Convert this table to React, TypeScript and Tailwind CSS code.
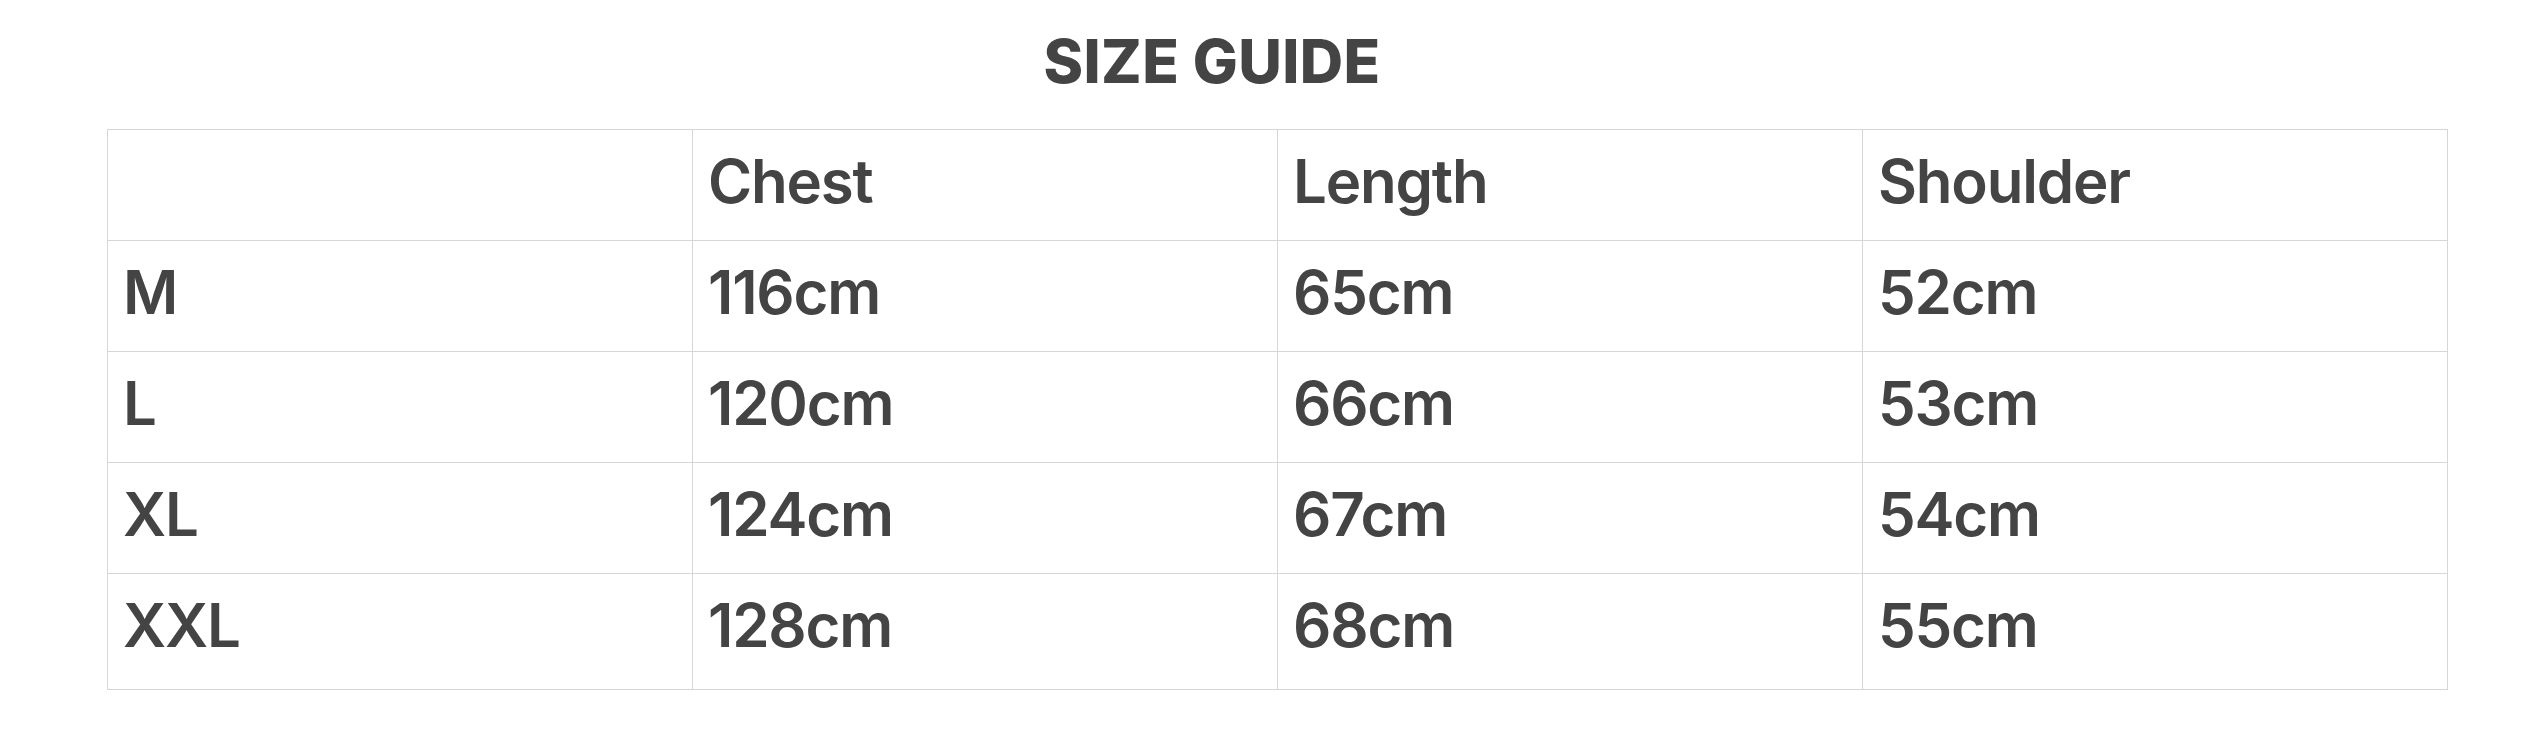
import React from "react";

const rows: string[][] = [
  ["", "Chest", "Length", "Shoulder"],
  ["M", "116cm", "65cm", "52cm"],
  ["L", "120cm", "66cm", "53cm"],
  ["XL", "124cm", "67cm", "54cm"],
  ["XXL", "128cm", "68cm", "55cm"],
];

export default function App() {
  return (
    <div
      className="w-[2524px] h-[729px] bg-white text-[#444444]"
      style={{ fontFamily: "Inter, 'Liberation Sans', sans-serif" }}
    >
      <div className="pl-[107px] pt-[25px]">
        <div className="w-[2210px] flex justify-center">
          <h1 className="text-[60px] leading-[72px] font-extrabold tracking-[0.4px]">SIZE GUIDE</h1>
        </div>
        <div className="mt-[32px] w-[2341px] border-l border-t border-[#d6d6d6] grid grid-cols-[585px_585px_585px_585px]">
          {rows.map((r, i) =>
            r.map((c, j) => (
              <div
                key={`${i}-${j}`}
                className={`border-r border-b border-[#d6d6d6] pl-[15px] pt-[15px] text-[60px] leading-[72px] font-semibold tracking-[-1.2px] ${
                  i === rows.length - 1 ? "h-[116px]" : "h-[111px]"
                }`}
              >
                {c}
              </div>
            ))
          )}
        </div>
      </div>
    </div>
  );
}
